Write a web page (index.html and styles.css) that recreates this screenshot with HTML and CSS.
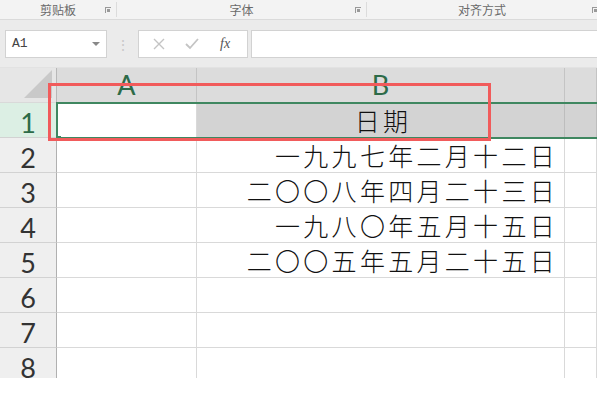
FILE: index.html
```html
<!DOCTYPE html>
<html lang="zh-CN">
<head>
    <meta charset="UTF-8">
    <title>日期</title>
    <link rel="stylesheet" href="styles.css">
</head>
<body>
    <!-- Lint groepen -->
    <div class="ribbon">
        <div class="group g-clip">剪贴板<span class="launch"></span></div>
        <div class="group g-font">字体<span class="launch"></span></div>
        <div class="group g-align">对齐方式<span class="launch"></span></div>
    </div>

    <!-- Formulebalk -->
    <div class="formula-row">
        <div class="name-box">A1<span class="caret"></span></div>
        <div class="grip">⋮</div>
        <div class="fx-buttons">
            <svg class="btn" width="14" height="14" viewBox="0 0 14 14"><path d="M2 2L12 12M12 2L2 12" stroke="#c4c4c4" stroke-width="1.4" fill="none"/></svg>
            <svg class="btn" width="16" height="14" viewBox="0 0 16 14"><path d="M2 7L6 11L14 2" stroke="#c4c4c4" stroke-width="1.8" fill="none"/></svg>
            <span class="fx">fx</span>
        </div>
        <div class="formula-input"></div>
    </div>

    <!-- Werkblad -->
    <div class="sheet">
        <div class="grid">
            <div class="corner"><span class="tri"></span></div>
            <div class="col-head">A</div>
            <div class="col-head">B</div>
            <div class="col-head"></div>

            <div class="row-head active">1</div>
            <div class="cell"></div>
            <div class="cell sel center">日期</div>
            <div class="cell sel"></div>

            <div class="row-head">2</div>
            <div class="cell"></div>
            <div class="cell right">一九九七年二月十二日</div>
            <div class="cell"></div>

            <div class="row-head">3</div>
            <div class="cell"></div>
            <div class="cell right">二〇〇八年四月二十三日</div>
            <div class="cell"></div>

            <div class="row-head">4</div>
            <div class="cell"></div>
            <div class="cell right">一九八〇年五月十五日</div>
            <div class="cell"></div>

            <div class="row-head">5</div>
            <div class="cell"></div>
            <div class="cell right">二〇〇五年五月二十五日</div>
            <div class="cell"></div>

            <div class="row-head">6</div>
            <div class="cell"></div>
            <div class="cell"></div>
            <div class="cell"></div>

            <div class="row-head">7</div>
            <div class="cell"></div>
            <div class="cell"></div>
            <div class="cell"></div>

            <div class="row-head">8</div>
            <div class="cell"></div>
            <div class="cell"></div>
            <div class="cell"></div>
        </div>

        <div class="selection"><span class="handle"></span></div>
        <div class="mark"></div>
    </div>

    <div class="footer"></div>
</body>
</html>
```

FILE: styles.css
```css
body {
    margin: 0;
    width: 597px;
    height: 396px;
    overflow: hidden;
    background: #fff;
    font-family: "Noto Sans CJK SC", sans-serif;
}

/* Lint */
.ribbon {
    display: flex;
    height: 19px;
    background: #f3f3f3;
    border-bottom: 1px solid #dadada;
    font-size: 12px;
    color: #6a6a6a;
}
.group {
    position: relative;
    display: flex;
    align-items: center;
    justify-content: center;
    border-right: 1px solid #dcdcdc;
    box-sizing: border-box;
    height: 15px;
    margin-top: 2px;
}
.g-clip { width: 117px; }
.g-font { width: 250px; }
.g-align { width: 230px; border-right: none; }
.launch {
    position: absolute;
    right: 5px;
    top: 5px;
    width: 5px;
    height: 5px;
    border-left: 1px solid #999;
    border-top: 1px solid #999;
}
.launch::after {
    content: "";
    position: absolute;
    left: 1px;
    top: 1px;
    width: 3px;
    height: 3px;
    background: #999;
}
.g-align .launch { right: -1px; }

/* Formulebalk */
.formula-row {
    display: flex;
    align-items: center;
    height: 48px;
    background: #ebebeb;
    padding-left: 5px;
    border-bottom: 1px solid #e2e2e2;
    box-sizing: border-box;
}
.name-box, .fx-buttons, .formula-input {
    height: 28px;
    box-sizing: border-box;
    background: #fff;
    border: 1px solid #d2d2d2;
}
.name-box {
    position: relative;
    width: 102px;
    display: flex;
    align-items: center;
    padding-left: 6px;
    font-family: "Liberation Mono", monospace;
    font-size: 13px;
    color: #444;
}
.caret {
    position: absolute;
    right: 6px;
    top: 11px;
    border-left: 4px solid transparent;
    border-right: 4px solid transparent;
    border-top: 4px solid #888;
}
.grip {
    width: 31px;
    text-align: center;
    color: #c8c8c8;
    font-size: 14px;
}
.fx-buttons {
    width: 110px;
    display: flex;
    align-items: center;
    padding-left: 13px;
    gap: 18px;
}
.fx {
    font-family: "Liberation Serif", serif;
    font-style: italic;
    font-size: 14px;
    color: #555;
    margin-left: 2px;
}
.formula-input {
    flex: 1;
    margin-left: 3px;
    border-right: none;
}

/* Werkblad */
.sheet {
    position: relative;
    height: 310px;
    overflow: hidden;
}
.grid {
    display: grid;
    grid-template-columns: 57px 140px 368px 1fr;
    grid-auto-rows: 35px;
}
.grid > div {
    box-sizing: border-box;
    border-right: 1px solid #d9d9d9;
    border-bottom: 1px solid #d9d9d9;
}
.corner {
    position: relative;
    background: #e6e6e6;
    border-right: 1px solid #b8b8b8 !important;
}
.tri {
    position: absolute;
    right: 4px;
    bottom: 4px;
    border-left: 28px solid transparent;
    border-bottom: 28px solid #c9c9c9;
}
.col-head {
    background: #dcdcdc;
    border-right-color: #c4c4c4 !important;
    display: flex;
    align-items: flex-end;
    justify-content: center;
    padding-bottom: 4px;
    font-family: Lato, "Open Sans", sans-serif;
    font-size: 27px;
    line-height: 1;
    color: #2d6b48;
}
.row-head {
    background: #efefef;
    border-right: 1px solid #b0b0b0 !important;
    border-bottom-color: #d2d2d2 !important;
    display: flex;
    align-items: center;
    justify-content: center;
    padding-top: 4px;
    font-family: Lato, "Open Sans", sans-serif;
    font-size: 27px;
    color: #333;
}
.row-head.active {
    background: #dcefe4;
    color: #2d6b48;
}
.cell {
    display: flex;
    align-items: center;
    font-size: 25px;
    font-weight: 300;
    letter-spacing: 3.3px;
    color: #111;
    padding-right: 6px;
}
.cell.right { justify-content: flex-end; }
.cell.center { justify-content: center; padding-right: 0; padding-left: 5px; }
.cell.sel {
    background: #d3d3d3;
    border-right-color: #bdbdbd !important;
}

/* Selectie en markering */
.selection {
    position: absolute;
    left: 56px;
    top: 34px;
    right: -4px;
    height: 37px;
    box-sizing: border-box;
    border: 2px solid #3f8760;
}
.handle {
    position: absolute;
    left: -2px;
    bottom: -3px;
    width: 5px;
    height: 4px;
    background: #3f8760;
}
.mark {
    position: absolute;
    left: 48px;
    top: 15px;
    width: 443px;
    height: 58px;
    box-sizing: border-box;
    border: 3px solid #f15b5b;
}
.footer {
    height: 18px;
    border-bottom: 1px solid #cfcfcf;
    width: 593px;
}
```
